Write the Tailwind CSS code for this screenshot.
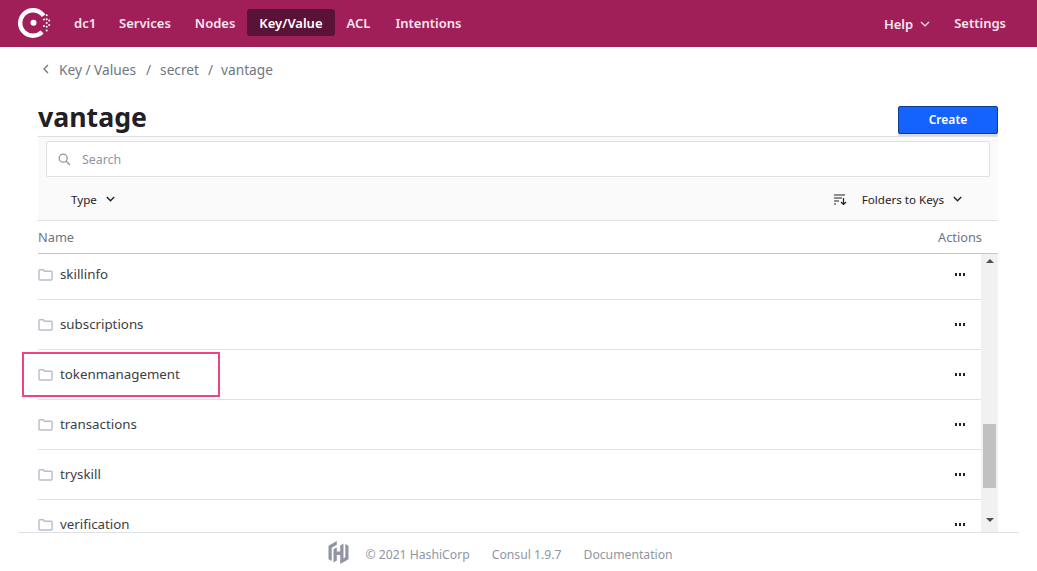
<!DOCTYPE html>
<html lang="en">
<head>
    <meta charset="UTF-8">
    <meta name="viewport" content="width=device-width, initial-scale=1.0">
    <title>Key/Value - Consul</title>
    <script src="https://cdn.jsdelivr.net/npm/@tailwindcss/browser@4"></script>
</head>
<body class="bg-white h-[571px] w-[1037px] overflow-hidden font-['Noto_Sans',sans-serif] flex flex-col">

    <!-- Top nav -->
    <header class="h-[47px] shrink-0 bg-[#a01f59] flex items-center justify-between text-[13px] font-semibold text-[#f5e6ef]">
        <div class="flex items-center">
            <svg class="ml-[18px] w-[33px] h-[33px]" viewBox="0 0 33 33" fill="#fff">
                <circle cx="15" cy="16" r="12.800" fill="none" stroke="#fff" stroke-width="4.400" stroke-dasharray="62.400 18"  transform="rotate(45 15 16)"/>
                <circle cx="15.500" cy="15.700" r="3"/>
                <circle cx="26" cy="12.500" r="1"/><circle cx="26" cy="19" r="1"/>
                <circle cx="28.700" cy="8.300" r="1"/><circle cx="28.700" cy="12.300" r="1"/><circle cx="28.700" cy="16" r="1"/><circle cx="28.700" cy="19.700" r="1"/><circle cx="28.700" cy="23.500" r="1"/>
                <circle cx="31.200" cy="13.500" r="1"/><circle cx="31.200" cy="18" r="1"/>
            </svg>
            <nav class="ml-[11px] mb-[2px] flex items-center">
                <a class="pl-[12px] pr-[11px] pt-[6px] pb-[4px]">dc1</a>
                <a class="px-[12px] pt-[6px] pb-[4px]">Services</a>
                <a class="px-[12px] pt-[6px] pb-[4px]">Nodes</a>
                <a class="px-[12px] h-[27px] leading-[29px] rounded-[3px] bg-[#5a1337] text-white">Key/Value</a>
                <a class="pl-[12px] pr-[13px] pt-[6px] pb-[4px]">ACL</a>
                <a class="px-[12px] pt-[6px] pb-[4px]">Intentions</a>
            </nav>
        </div>
        <div class="flex items-center mr-[31px]">
            <a class="flex items-center gap-[7px]"><span class="pt-[2px]">Help</span>
                <svg class="w-[10px] h-[6px]" viewBox="0 0 10 6" fill="none" stroke="#f5e6ef" stroke-width="1.200"><path d="M1 1l4 4 4-4"/></svg>
            </a>
            <a class="ml-[24px]">Settings</a>
        </div>
    </header>

    <main class="flex-1 min-h-0 ml-[38px] mr-[39px] flex flex-col">
        <!-- Breadcrumbs -->
        <div class="h-[47px] shrink-0 flex items-center text-[13.700px] text-[#6f7682]">
            <svg class="ml-[5px] mr-[10px] w-[6px] h-[10px] -mt-[3px]" viewBox="0 0 6 10" fill="none" stroke="#6f7682" stroke-width="1.300"><path d="M5 1L1 5l4 4"/></svg>
            <span>Key / Values</span>
            <span class="ml-[10px]">/</span>
            <span class="ml-[9px]">secret</span>
            <span class="ml-[9px]">/</span>
            <span class="ml-[8px]">vantage</span>
        </div>

        <!-- Title row -->
        <div class="h-[42px] shrink-0 flex items-end justify-between">
            <h1 class="text-[26.700px] leading-[38px] font-bold text-[#1f2126]">vantage</h1>
            <button class="w-[100px] h-[28px] mb-[2px] bg-[#1563ff] border border-[#0c3a8f] rounded-[2px] text-white text-[12px] font-semibold shadow-[0_3px_0_rgba(0,0,0,0.15)]">Create</button>
        </div>

        <!-- Filter bar -->
        <div class="h-[85px] shrink-0 bg-[#fafafa] border-t border-b border-[#dfe0e6] pt-[4px] flex flex-col">
            <div class="mx-[8px] h-[36px] bg-white border border-[#dfe0e6] rounded-[2px] flex items-center">
                <svg class="ml-[11px] w-[13px] h-[13px]" viewBox="0 0 13 13" fill="none" stroke="#8e96a3" stroke-width="1.300"><circle cx="5.200" cy="5.200" r="4"/><path d="M8.200 8.200L12 12"/></svg>
                <span class="ml-[11px] pt-[2px] text-[12.400px] text-[#8e96a3]">Search</span>
            </div>
            <div class="flex-1 pt-[2px] flex items-center justify-between text-[11.600px] text-[#1f2126]">
                <div class="ml-[33px] flex items-center gap-[9px]">Type
                    <svg class="w-[9px] h-[6px]" viewBox="0 0 9 6" fill="none" stroke="#1f2126" stroke-width="1.400"><path d="M.8 1l3.700 3.700L8.200 1"/></svg>
                </div>
                <div class="mr-[36px] flex items-center">
                    <svg class="w-[13px] h-[11px] mr-[15px]" viewBox="0 0 13 11" fill="none" stroke="#1f2126" stroke-width="1.200"><path d="M0 1h11M0 4h8M0 7h5M0 10h2M9.500 4v6.500M7 8l2.500 2.500L12 8"/></svg>
                    <span>Folders to Keys</span>
                    <svg class="ml-[9px] w-[9px] h-[6px]" viewBox="0 0 9 6" fill="none" stroke="#1f2126" stroke-width="1.400"><path d="M.8 1l3.700 3.700L8.200 1"/></svg>
                </div>
            </div>
        </div>

        <!-- Table head -->
        <div class="h-[33px] pt-[2px] shrink-0 border-b border-[#c5c6d0] flex items-center justify-between text-[12.800px] text-[#6f7682]">
            <span>Name</span>
            <span class="mr-[16px]">Actions</span>
        </div>

        <!-- Rows -->
        <div class="h-[278px] shrink-0 flex overflow-hidden">
            <div class="flex-1 min-w-0 -mt-[4px] text-[13.300px] text-[#3b3e46]">
                <div class="h-[50px] border-b border-[#e2e2e6] flex items-center justify-between">
                    <div class="flex items-center"><svg class="w-[15px] h-[12px] mr-[7px]" viewBox="0 0 15 12" fill="none" stroke="#b9bdc8" stroke-width="1.400"><path d="M1 1.600Q1 .700 1.900 .700h3.300l1.300 1.500h6.600q1 0 1 1v6.800q0 1-1 1H1.900q-.9 0-.9-1z"/></svg>skillinfo</div>
                    <span class="mr-[16px] flex gap-[1.500px]"><i class="w-[2.500px] h-[2.500px] bg-[#1f2126]"></i><i class="w-[2.500px] h-[2.500px] bg-[#1f2126]"></i><i class="w-[2.500px] h-[2.500px] bg-[#1f2126]"></i></span>
                </div>
                <div class="h-[50px] border-b border-[#e2e2e6] flex items-center justify-between">
                    <div class="flex items-center"><svg class="w-[15px] h-[12px] mr-[7px]" viewBox="0 0 15 12" fill="none" stroke="#b9bdc8" stroke-width="1.400"><path d="M1 1.600Q1 .700 1.900 .700h3.300l1.300 1.500h6.600q1 0 1 1v6.800q0 1-1 1H1.900q-.9 0-.9-1z"/></svg>subscriptions</div>
                    <span class="mr-[16px] flex gap-[1.500px]"><i class="w-[2.500px] h-[2.500px] bg-[#1f2126]"></i><i class="w-[2.500px] h-[2.500px] bg-[#1f2126]"></i><i class="w-[2.500px] h-[2.500px] bg-[#1f2126]"></i></span>
                </div>
                <div class="h-[50px] border-b border-[#e2e2e6] flex items-center justify-between">
                    <div class="flex items-center"><svg class="w-[15px] h-[12px] mr-[7px]" viewBox="0 0 15 12" fill="none" stroke="#b9bdc8" stroke-width="1.400"><path d="M1 1.600Q1 .700 1.900 .700h3.300l1.300 1.500h6.600q1 0 1 1v6.800q0 1-1 1H1.900q-.9 0-.9-1z"/></svg>tokenmanagement</div>
                    <span class="mr-[16px] flex gap-[1.500px]"><i class="w-[2.500px] h-[2.500px] bg-[#1f2126]"></i><i class="w-[2.500px] h-[2.500px] bg-[#1f2126]"></i><i class="w-[2.500px] h-[2.500px] bg-[#1f2126]"></i></span>
                </div>
                <div class="h-[50px] border-b border-[#e2e2e6] flex items-center justify-between">
                    <div class="flex items-center"><svg class="w-[15px] h-[12px] mr-[7px]" viewBox="0 0 15 12" fill="none" stroke="#b9bdc8" stroke-width="1.400"><path d="M1 1.600Q1 .700 1.900 .700h3.300l1.300 1.500h6.600q1 0 1 1v6.800q0 1-1 1H1.900q-.9 0-.9-1z"/></svg>transactions</div>
                    <span class="mr-[16px] flex gap-[1.500px]"><i class="w-[2.500px] h-[2.500px] bg-[#1f2126]"></i><i class="w-[2.500px] h-[2.500px] bg-[#1f2126]"></i><i class="w-[2.500px] h-[2.500px] bg-[#1f2126]"></i></span>
                </div>
                <div class="h-[50px] border-b border-[#e2e2e6] flex items-center justify-between">
                    <div class="flex items-center"><svg class="w-[15px] h-[12px] mr-[7px]" viewBox="0 0 15 12" fill="none" stroke="#b9bdc8" stroke-width="1.400"><path d="M1 1.600Q1 .700 1.900 .700h3.300l1.300 1.500h6.600q1 0 1 1v6.800q0 1-1 1H1.900q-.9 0-.9-1z"/></svg>tryskill</div>
                    <span class="mr-[16px] flex gap-[1.500px]"><i class="w-[2.500px] h-[2.500px] bg-[#1f2126]"></i><i class="w-[2.500px] h-[2.500px] bg-[#1f2126]"></i><i class="w-[2.500px] h-[2.500px] bg-[#1f2126]"></i></span>
                </div>
                <div class="h-[50px] border-b border-[#e2e2e6] flex items-center justify-between">
                    <div class="flex items-center"><svg class="w-[15px] h-[12px] mr-[7px]" viewBox="0 0 15 12" fill="none" stroke="#b9bdc8" stroke-width="1.400"><path d="M1 1.600Q1 .700 1.900 .700h3.300l1.300 1.500h6.600q1 0 1 1v6.800q0 1-1 1H1.900q-.9 0-.9-1z"/></svg>verification</div>
                    <span class="mr-[16px] flex gap-[1.500px]"><i class="w-[2.500px] h-[2.500px] bg-[#1f2126]"></i><i class="w-[2.500px] h-[2.500px] bg-[#1f2126]"></i><i class="w-[2.500px] h-[2.500px] bg-[#1f2126]"></i></span>
                </div>
            </div>
            <!-- Scrollbar -->
            <div class="w-[17px] shrink-0 bg-[#f1f1f1] flex flex-col items-center">
                <svg class="mt-[5px] w-[8px] h-[4px]" viewBox="0 0 8 4" fill="#505050"><path d="M4 0l4 4H0z"/></svg>
                <div class="mt-[161px] w-[13px] h-[64px] bg-[#c1c1c1]"></div>
                <svg class="mt-[30px] w-[8px] h-[4px]" viewBox="0 0 8 4" fill="#505050"><path d="M4 4L0 0h8z"/></svg>
            </div>
        </div>
    </main>

    <!-- Footer -->
    <footer class="h-[39px] shrink-0 mx-[18px] pt-[5px] pr-[36px] border-t border-[#dfe0e6] flex items-center justify-center text-[12.200px] text-[#8e96a3] gap-[22px]">
        <div class="flex items-center">
            <svg class="w-[21px] h-[23px] mr-[16px] -mt-[4px]" viewBox="0 0 21 23" fill="#8e96a3">
                <path d="M8.800 0L.5 4.800v13.400l3.200 1.900V6.700l5.100-3z"/>
                <path d="M12.200 23l8.300-4.800V4.800L17.300 2.900v13.400l-5.100 3z"/>
                <path d="M8.800 5.800v4.300h3.400V4l3.300-2v15l-3.300 2v-5.500H8.800V19l-3.300 2V7.800z" transform="translate(0 .5)"/>
            </svg>
            <span class="pt-[2px]">© 2021 HashiCorp</span>
        </div>
        <span class="pt-[2px]">Consul 1.9.7</span>
        <span class="pt-[2px]">Documentation</span>
    </footer>

    <!-- Annotation drawn over the screenshot -->
    <div class="absolute left-[22px] top-[352px] w-[198px] h-[45px] border-2 border-[#f0447f]"></div>
</body>
</html>
